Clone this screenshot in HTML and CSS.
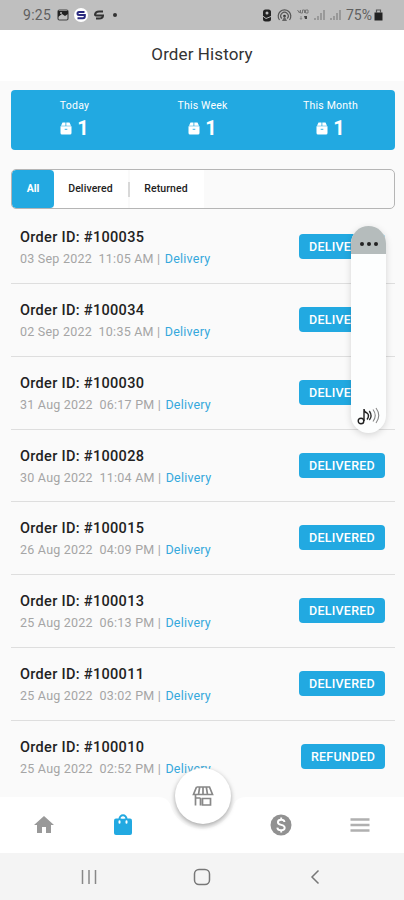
FILE: index.html
```html
<!doctype html>
<html lang="en">
<head>
  <meta charset="UTF-8">
  <meta name="viewport" content="width=device-width, initial-scale=1">
  <title>Order History</title>
  <link rel="stylesheet" href="styles.css">
</head>
<body>
  <!-- shared shapes -->
  <svg class="defs" width="0" height="0">
    <symbol id="box" viewBox="0 0 12 13">
      <path d="M2.500.5h3v3.300H1zM6.300.5h3.200l1.500 3.300H6.300zM.5 4.200h11V11q0 1.500-1.500 1.500H2Q.5 12.500.5 11z"/>
      <path d="M4.700 7.300h2.600" stroke="#22a9e1" stroke-width=".9"/>
    </symbol>
    <symbol id="signal" viewBox="0 0 12 12">
      <path d="M1 11V9M4 11V7M7 11V4M10 11V1" stroke="currentColor" stroke-width="1.300"/>
    </symbol>
  </svg>

  <div class="phone">
    <header class="status">
      <div class="status-left">
        <span class="clock">9:25</span>
        <svg width="12" height="12" viewBox="0 0 12 12"><rect x="1" y="1" width="10" height="10" rx="1.500" fill="none" stroke="#444" stroke-width="1.200"/><path d="M1 2h10v3L8 7 5 5 1 8z" fill="#222"/><circle cx="4" cy="4" r="1" fill="#bbb"/></svg>
        <svg width="14" height="14" viewBox="0 0 14 14"><circle cx="7" cy="7" r="7" fill="#fff"/><path d="M10.500 4H5Q3.500 4 3.500 5.500 3.500 7 5 7h5M3.500 10.200H9q1.800 0 1.800-2V7H6" fill="none" stroke="#29297f" stroke-width="2"/></svg>
        <svg width="12" height="12" viewBox="0 0 12 12"><path d="M10 2.500H6Q2.500 2.500 2 5.500q0 1 2 1h5M3 9.500h3q4 0 4-3H6" fill="none" stroke="#333" stroke-width="2"/></svg>
        <span class="dot"></span>
      </div>
      <div class="status-right">
        <svg width="10" height="13" viewBox="0 0 10 13"><rect x="1" y=".5" width="8" height="12" rx="2.500" fill="#222"/><circle cx="5" cy="4" r="1.500" fill="#bbb"/><path d="M0 6.500l4 3 5-2" fill="none" stroke="#bbb"/></svg>
        <svg width="15" height="13" viewBox="0 0 15 13"><g fill="none" stroke="#555" stroke-width="1.200"><path d="M2.500 11a6.300 6.300 0 1 1 10 0M4.800 9.500a3.700 3.700 0 1 1 5.400 0"/></g><circle cx="7.500" cy="7" r="1.300" fill="#333"/><path d="M7.500 7L5 12h5z" fill="#666"/></svg>
        <svg class="volte" width="12" height="12" viewBox="0 0 12 12"><path d="M.5 1l2 3 1-3v3h2V1h2v3M8.500 1v3H11V1z" fill="none" stroke="#777"/><path d="M4 7v3M3 9l1 1.500L5 9" fill="none" stroke="#888"/><path d="M7 7h3v3H8z" fill="#444"/></svg>
        <svg class="sig" width="12" height="12"><use href="#signal"/></svg>
        <svg class="sig" width="12" height="12"><use href="#signal"/></svg>
        <span class="charge">75%</span>
        <svg width="9" height="12" viewBox="0 0 9 12"><path d="M.5 3.500h8v8h-8z" fill="#222"/><path d="M2.500 4V1h4v3" fill="none" stroke="#555" stroke-width="1.200"/></svg>
      </div>
    </header>

    <h1 class="title">Order History</h1>

    <main class="content">
      <section class="summary">
        <div class="stat"><span>Today</span><b><svg width="12" height="13"><use href="#box"/></svg>1</b></div>
        <div class="stat"><span>This Week</span><b><svg width="12" height="13"><use href="#box"/></svg>1</b></div>
        <div class="stat"><span>This Month</span><b><svg width="12" height="13"><use href="#box"/></svg>1</b></div>
      </section>

      <nav class="tabs">
        <a class="tab active">All</a>
        <a class="tab delivered">Delivered</a>
        <i class="sep"></i>
        <a class="tab returned">Returned</a>
      </nav>

      <ul class="orders">
        <li class="order"><div><h2>Order ID: #100035</h2><p>03 Sep 2022&nbsp; 11:05 AM <i>|</i> <a>Delivery</a></p></div><span class="badge">DELIVERED</span></li>
        <li class="order"><div><h2>Order ID: #100034</h2><p>02 Sep 2022&nbsp; 10:35 AM <i>|</i> <a>Delivery</a></p></div><span class="badge">DELIVERED</span></li>
        <li class="order"><div><h2>Order ID: #100030</h2><p>31 Aug 2022&nbsp; 06:17 PM <i>|</i> <a>Delivery</a></p></div><span class="badge">DELIVERED</span></li>
        <li class="order"><div><h2>Order ID: #100028</h2><p>30 Aug 2022&nbsp; 11:04 AM <i>|</i> <a>Delivery</a></p></div><span class="badge">DELIVERED</span></li>
        <li class="order"><div><h2>Order ID: #100015</h2><p>26 Aug 2022&nbsp; 04:09 PM <i>|</i> <a>Delivery</a></p></div><span class="badge">DELIVERED</span></li>
        <li class="order"><div><h2>Order ID: #100013</h2><p>25 Aug 2022&nbsp; 06:13 PM <i>|</i> <a>Delivery</a></p></div><span class="badge">DELIVERED</span></li>
        <li class="order"><div><h2>Order ID: #100011</h2><p>25 Aug 2022&nbsp; 03:02 PM <i>|</i> <a>Delivery</a></p></div><span class="badge">DELIVERED</span></li>
        <li class="order"><div><h2>Order ID: #100010</h2><p>25 Aug 2022&nbsp; 02:52 PM <i>|</i> <a>Delivery</a></p></div><span class="badge refunded">REFUNDED</span></li>
      </ul>
    </main>

    <nav class="bottom">
      <svg class="curve" width="404" height="56" viewBox="0 0 404 56"><path d="M0 0h158q9 0 12 7a33 33 0 0 0 64 0q3-7 12-7h158v56H0z" fill="#fff"/></svg>
      <a class="item"><svg width="22" height="24" viewBox="1 0 22 24" fill="#999"><path d="M10 20v-6h4v6h5v-8h3L12 3 2 12h3v8z"/></svg></a>
      <a class="item"><svg width="24" height="24" viewBox="0 0 24 24"><path d="M5 5.500h14q2 0 2 2V20q0 2-2 2H5q-2 0-2-2V7.500q0-2 2-2z" fill="#22a9e1"/><path d="M8.500 6a3.500 3.800 0 0 1 7 0" fill="none" stroke="#22a9e1" stroke-width="2"/><path d="M8.500 8.200v1.600M15.500 8.200v1.600" fill="none" stroke="#fff" stroke-width="2" stroke-linecap="round"/><path d="M10.300 5.500a1.700 1.700 0 0 1 3.400 0z" fill="#fff"/></svg></a>
      <span class="item"></span>
      <a class="item"><svg width="24" height="24" viewBox="0 0 24 24"><circle cx="12" cy="12" r="10.500" fill="#919191"/><path d="M15.500 9q-.3-2.300-3.300-2.300-3.300 0-3.300 2.500 0 1.900 3.300 2.700 3.500.8 3.500 2.900 0 2.500-3.500 2.500-3.600 0-3.900-2.700M12.200 4.500v2.500M12.200 17v2.500" fill="none" stroke="#fff" stroke-width="1.900"/></svg></a>
      <a class="item"><svg width="20" height="16" viewBox="0 0 20 16"><path d="M.5 2.500h19M.5 8h19M.5 13.500h19" stroke="#b0b0b0" stroke-width="2.600"/></svg></a>
      <a class="fab"><svg width="22" height="22" viewBox="0 0 22 22" fill="none" stroke="#888" stroke-width="1.700"><path d="M4.500 2h13l3 7.500h-5L14.300 2M4.500 2l-3 7.500h5L7.700 2M11 2v7.500M6.500 9.500h9M3.500 10v10.500M8.500 20.500V13M3 13h5.500M10.500 13.500h8v6.500h-8z"/></svg></a>
    </nav>

    <footer class="system">
      <span><svg width="16" height="16" viewBox="0 0 16 16"><path d="M1.500 1v14M8 1v14M14.500 1v14" stroke="#888" stroke-width="1.500"/></svg></span>
      <span><svg width="18" height="18" viewBox="0 0 18 18"><rect x="1.500" y="1.500" width="15" height="15" rx="4.500" fill="none" stroke="#777" stroke-width="1.500"/></svg></span>
      <span><svg width="10" height="16" viewBox="0 0 10 16"><path d="M8.500 1.500L2 8l6.500 6.500" fill="none" stroke="#777" stroke-width="1.500"/></svg></span>
    </footer>

    <!-- floating sound panel -->
    <aside class="panel">
      <div class="grip"><i></i><i></i><i></i></div>
      <svg width="24" height="20" viewBox="0 0 24 20" fill="none" stroke="#222" stroke-width="1.400"><circle cx="4" cy="15" r="2.800"/><path d="M7 15V3q0 3 3 4 3 2.500 0 6.500"/><path d="M12.300 5q3.500 5 0 9" stroke="#333"/><path d="M16 3.500q4.500 6 0 12M19 2q5.500 7.500 0 15" stroke="#888" stroke-width="1.100"/></svg>
    </aside>
  </div>
</body>
</html>
```

FILE: styles.css
```css
* {box-sizing: border-box;}
body {margin: 0; background: #fafafa; font-family: Roboto, "Liberation Sans", sans-serif; color: #222;}
h1, h2, p, ul {margin: 0; padding: 0;}
i {font-style: normal;}
svg {display: block; flex: none;}
.defs {position: absolute;}

.phone {position: relative; width: 404px; height: 900px; overflow: hidden; display: flex; flex-direction: column;}

.status {height: 30px; flex: none; background: #bfbfbf; color: #606060; display: flex; justify-content: space-between; align-items: center; padding: 0 19px 0 23px;}
.status-left, .status-right {display: flex; align-items: center;}
.clock {font-size: 14px; width: 29px; margin-right: 5px; letter-spacing: .3px;}
.status-left svg {margin-right: 5px;}
.status-left .dot {width: 4px; height: 4px; border-radius: 50%; background: #333; margin-left: 3px;}
.status-right svg {margin-right: 5px;}
.status-right .sig {color: #858585; margin-right: 4px;}
.status-right svg:last-child {margin-right: 2px;}
.charge {font-size: 14px; width: 27px; margin-right: 1px;}

.title {height: 51px; flex: none; background: #fff; text-align: center; font-size: 17px; line-height: 49px; font-weight: 400; letter-spacing: .1px; color: #333;}

.content {flex: 1; min-height: 0; padding: 9px 9px 0 11px; overflow: hidden;}
.summary {height: 60px; background: #22a9e1; border-radius: 4px; color: #fff; display: grid; grid-template-columns: 127px 129px 127px; text-align: center;}
.stat {padding-top: 8px;}
.stat span {display: block; font-size: 10.500px; line-height: 15px; letter-spacing: .2px;}
.stat b {display: flex; justify-content: center; align-items: center; gap: 5px; font-size: 20px; line-height: 24px; font-weight: 700; margin-top: 3px;}
.stat svg {fill: #fff;}

.tabs {height: 40px; margin-top: 19px; border: 1px solid #b5b5b5; border-radius: 5px; display: flex; align-items: center; font-size: 10.500px; font-weight: 500; overflow: hidden;}
.tab {height: 38px; line-height: 38px; text-align: center; background: #fff;}
.active {width: 42px; background: #22a9e1; color: #fff; border-radius: 4px; font-weight: 700;}
.delivered {width: 74px; padding-right: 1px; letter-spacing: .1px;}
.sep {width: 2px; height: 15px; background: #d8d8d8;}
.returned {width: 74px; padding-right: 2px; letter-spacing: .1px;}

.orders {list-style: none; margin-top: 2px;}
.order {height: 72.850px; border-bottom: 1px solid #dedede; display: flex; justify-content: space-between; padding: 17px 10px 0 9px;}
.order:last-child {border-bottom: 0;}
.order h2 {font-size: 14.500px; line-height: 20px; font-weight: 500; letter-spacing: .32px;}
.order p {font-size: 12.500px; line-height: 18px; letter-spacing: .23px; color: #a5a5a5; margin-top: 2px; white-space: nowrap;}
.order p i {margin: 0 1px 0 0;}
.order a {color: #35a8dc;}
.badge {width: 86px; height: 25px; line-height: 25px; margin-top: 6px; border-radius: 4px; background: #22a9e1; color: #fff; font-size: 12.500px; font-weight: 500; text-align: center; letter-spacing: .25px;}
.refunded {width: 84px;}

.bottom {position: relative; height: 56px; flex: none; display: flex; align-items: center; padding: 0 5px;}
.curve {position: absolute; left: 0; top: 0;}
.item {position: relative; flex: 1; display: flex; justify-content: center;}
.fab {position: absolute; left: 175px; top: -29px; width: 56px; height: 56px; border-radius: 50%; background: #fff; box-shadow: 0 2px 5px rgba(0,0,0,.35); display: flex; align-items: center; justify-content: center;}

.system {height: 47px; flex: none; background: #f4f4f4; display: grid; grid-template-columns: repeat(3, 113px); justify-content: center; align-items: center;}
.system span {display: flex; justify-content: center;}

.panel {position: absolute; left: 351px; top: 226px; width: 35px; height: 207px; border-radius: 18px; background: #fdfefe; overflow: hidden; box-shadow: 0 2px 7px rgba(0,0,0,.15); display: flex; flex-direction: column; align-items: center; justify-content: space-between; padding-bottom: 7px;}
.grip {width: 36px; height: 28px; background: #b5bcbc; display: flex; justify-content: center; align-items: center; gap: 3px; padding-top: 8px;}
.grip i {width: 4px; height: 4px; border-radius: 50%; background: #222;}
```
